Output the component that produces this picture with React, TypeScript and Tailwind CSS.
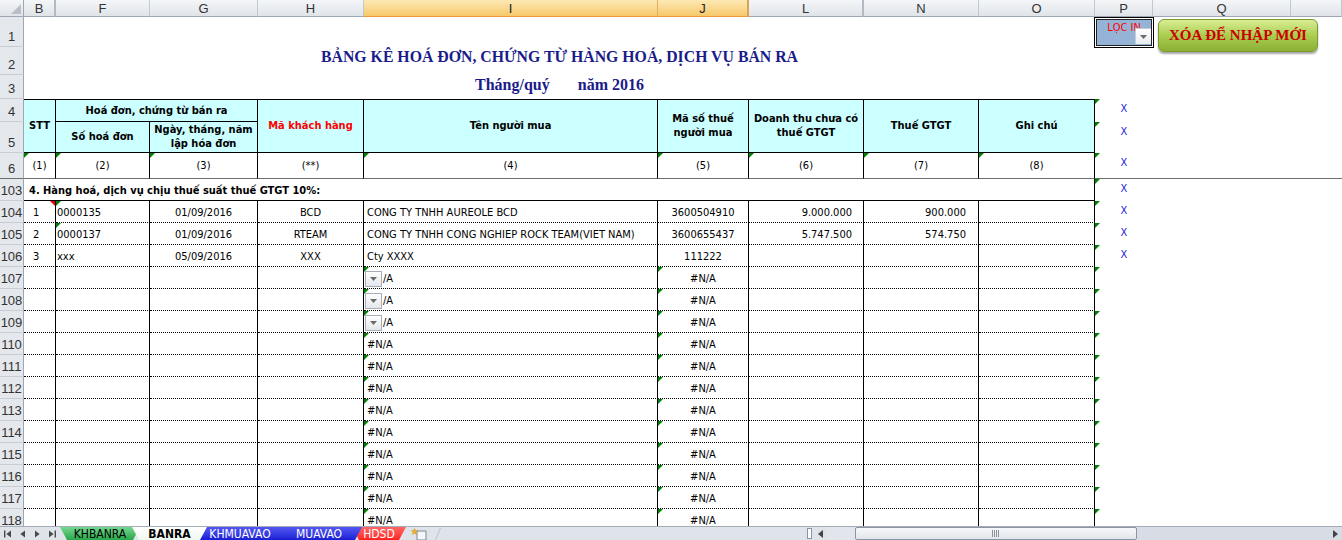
import React from "react";

const CF = "font-['DejaVu_Sans_Condensed','Liberation_Sans',sans-serif]";
const HF = "font-['Liberation_Sans',sans-serif]";
const SF = "font-['Liberation_Serif',serif]";

function GreenTri() {
  return <span className="absolute left-0 top-0 h-0 w-0 border-t-[5px] border-r-[5px] border-t-[#008000] border-r-transparent" />;
}
function RedTri() {
  return <span className="absolute right-0 top-0 h-0 w-0 border-t-[5px] border-l-[5px] border-t-[#ff0000] border-l-transparent" />;
}

function RowHdr({ n, freeze }: { n: number | string; freeze?: boolean }) {
  return (
    <div
      className={`${HF} flex items-end justify-center bg-[#e4e7ec] border-r border-r-[#9ea7b1] border-b pb-[2px] text-[13px] leading-[14px] text-[#333] ${
        freeze ? "border-b-[#6e6e6e]" : "border-b-[#c8cdd4]"
      }`}
    >
      {n}
    </div>
  );
}

function ColHdr({ l, sel, dbl }: { l: string; sel?: boolean; dbl?: boolean }) {
  const base = `${HF} flex items-center justify-center text-[13px] leading-none border-b`;
  if (sel)
    return (
      <div className={`${base} bg-gradient-to-b from-[#fde9b4] to-[#f6c86a] border-b-[#ef9a3c] text-[#222] ${dbl ? "border-r-2 border-r-[#d9a454]" : "border-r border-r-[#dfae5e]"}`}>
        {l}
      </div>
    );
  return (
    <div className={`${base} bg-gradient-to-b from-[#f4f6f8] to-[#e0e4e9] border-b-[#9ea7b1] text-[#333] ${dbl ? "border-r-2 border-r-[#b3bac3]" : "border-r border-r-[#c2c8cf]"}`}>
      {l}
    </div>
  );
}

function XCell({ x, freeze }: { x?: boolean; freeze?: boolean }) {
  return (
    <div className={`relative flex justify-center pt-[3px] text-[11px] leading-[14px] text-[#2424d8] ${freeze ? "border-b border-b-[#6e6e6e]" : ""}`}>
      <GreenTri />
      {x ? "X" : ""}
    </div>
  );
}

type Row = {
  n: number;
  b?: string;
  f?: string;
  g?: string;
  h?: string;
  i?: string;
  j?: string;
  l?: string;
  nn?: string;
  x?: boolean;
  triF?: boolean;
  redB?: boolean;
  triIJ?: boolean;
  dd?: boolean;
};

const rows: Row[] = [
  { n: 104, b: "1", f: "0000135", g: "01/09/2016", h: "BCD", i: "CONG TY TNHH AUREOLE BCD", j: "3600504910", l: "9.000.000", nn: "900.000", x: true, triF: true, redB: true },
  { n: 105, b: "2", f: "0000137", g: "01/09/2016", h: "RTEAM", i: "CONG TY TNHH CONG NGHIEP ROCK TEAM(VIET NAM)", j: "3600655437", l: "5.747.500", nn: "574.750", x: true, triF: true },
  { n: 106, b: "3", f: "xxx", g: "05/09/2016", h: "XXX", i: "Cty XXXX", j: "111222", x: true },
  ...Array.from({ length: 12 }, (_, k) => ({ n: 107 + k, i: "#N/A", j: "#N/A", triIJ: true, dd: k < 3 })),
];

const dc =
  "relative flex items-center overflow-hidden whitespace-nowrap border-r border-b border-r-black border-b-black [border-bottom-style:dotted] pt-[3px] text-[11px] leading-[14px] text-black";

const hc = "flex items-center justify-center text-center bg-[#ccffff] border-r border-b border-black font-bold text-[11px] leading-[14px] whitespace-nowrap";
const h6 = "relative flex items-center justify-center border-r border-r-black border-b border-b-[#6e6e6e] pt-[1px] text-[11px] leading-[14px]";

function DropBtn() {
  return (
    <span className="ml-[1px] flex h-[16px] w-[17px] shrink-0 items-center justify-center border border-[#a7aeb7] bg-gradient-to-b from-white to-[#e3e7ec]">
      <svg width="7" height="4" viewBox="0 0 7 4">
        <path d="M0 0H7L3.5 4Z" fill="#6b6b6b" />
      </svg>
    </span>
  );
}

function DataRow({ r }: { r: Row }) {
  return (
    <>
      <RowHdr n={r.n} />
      <div className={`${dc} pl-[9px]`}>
        {r.redB && <RedTri />}
        {r.b}
      </div>
      <div className={`${dc} pl-[1px]`}>
        {r.triF && <GreenTri />}
        {r.f}
      </div>
      <div className={`${dc} justify-center`}>{r.g}</div>
      <div className={`${dc} justify-center`}>{r.h}</div>
      <div className={`${dc} ${r.dd ? "pl-0" : "pl-[3px]"}`}>
        {r.triIJ && <GreenTri />}
        {r.dd ? (
          <>
            <DropBtn />
            <span className="ml-[1px]">/A</span>
          </>
        ) : (
          r.i
        )}
      </div>
      <div className={`${dc} justify-center`}>
        {r.triIJ && <GreenTri />}
        {r.j}
      </div>
      <div className={`${dc} justify-end pr-[11px]`}>{r.l}</div>
      <div className={`${dc} justify-end pr-[12px]`}>{r.nn}</div>
      <div className={dc}></div>
      <XCell x={r.x} />
      <div className="col-span-2"></div>
    </>
  );
}

function Arrow({ dir, bar }: { dir: "l" | "r"; bar?: boolean }) {
  return (
    <svg width="7" height="8" viewBox="0 0 7 8">
      {dir === "l" ? (
        <>
          {bar && <rect x="0" y="0.5" width="1.4" height="7" fill="#4a4a4a" />}
          <path d={bar ? "M7 0.5L2.4 4L7 7.5Z" : "M6 0.5L1.4 4L6 7.5Z"} fill="#4a4a4a" />
        </>
      ) : (
        <>
          {bar && <rect x="5.6" y="0.5" width="1.4" height="7" fill="#4a4a4a" />}
          <path d={bar ? "M0 0.5L4.6 4L0 7.5Z" : "M1 0.5L5.6 4L1 7.5Z"} fill="#4a4a4a" />
        </>
      )}
    </svg>
  );
}

const clip = "[clip-path:polygon(0_0,100%_0,calc(100%_-_7px)_100%,7px_100%)]";

function TabBar() {
  return (
    <div className={`${CF} relative flex h-[14px] shrink-0 items-stretch border-t border-[#a3acb7] bg-[#dfe4ea]`}>
      <div className="flex w-[60px] items-center gap-[8px] pl-[4px] pt-[1px]">
        <Arrow dir="l" bar />
        <Arrow dir="l" />
        <Arrow dir="r" />
        <Arrow dir="r" bar />
      </div>
      <div className={`${clip} relative z-[5] flex w-[80px] justify-center bg-gradient-to-b from-[#73d690] to-[#22a848] pt-[1px] text-[12px] leading-[12px] text-black`}>
        KHBANRA
      </div>
      <div className={`${clip} relative z-[10] ml-[-8px] flex w-[75px] justify-center bg-gradient-to-b from-white to-[#eef8f1] pt-[1px] text-[12px] font-bold leading-[12px] text-black`}>
        BANRA
      </div>
      <div className={`${clip} relative z-[4] ml-[-17px] flex w-[100px] justify-center bg-gradient-to-b from-[#5555f2] to-[#1b1bd3] pt-[1px] text-[12px] leading-[12px] text-white`}>
        KHMUAVAO
      </div>
      <div className={`${clip} relative z-[3] ml-[-14px] flex w-[86px] justify-center bg-gradient-to-b from-[#5555f2] to-[#1b1bd3] pt-[1px] text-[12px] leading-[12px] text-white`}>
        MUAVAO
      </div>
      <div className={`${clip} relative z-[2] ml-[-10px] flex w-[54px] justify-center bg-gradient-to-b from-[#ff6464] to-[#ff1c1c] pt-[1px] text-[12px] leading-[12px] text-white`}>
        HDSD
      </div>
      <div className="ml-[5px] flex w-[20px] items-start pt-[1px]">
        <svg width="18" height="12" viewBox="0 0 18 12">
          <path d="M6 3H15V12H6Z" fill="#f4f7fb" stroke="#7a8898" strokeWidth="1" />
          <path d="M3.5 0.5L4.3 2.6L6.5 2.8L4.8 4.2L5.4 6.4L3.5 5.2L1.6 6.4L2.2 4.2L0.5 2.8L2.7 2.6Z" fill="#f2b631" stroke="#c98a12" strokeWidth="0.5" />
        </svg>
      </div>
      <div className="ml-[4px] w-[6px]">
        <svg width="6" height="13" viewBox="0 0 6 13">
          <path d="M0.5 12.5L5.5 1" stroke="#b9c1cb" strokeWidth="1" />
        </svg>
      </div>
      <div className="ml-auto flex w-[537px] items-stretch">
        <div className="flex w-[8px] items-center justify-center">
          <div className="h-[11px] w-[5px] border border-[#8b95a1] bg-white" />
        </div>
        <div className="flex w-[14px] items-center justify-center">
          <svg width="5" height="8" viewBox="0 0 5 8">
            <path d="M5 0L0 4L5 8Z" fill="#444" />
          </svg>
        </div>
        <div className="w-[28px] bg-[#e2e6ec]" />
        <div className="flex w-[282px] items-center justify-center rounded-[2px] border border-[#8b95a1] bg-gradient-to-b from-[#f6f8fa] to-[#e2e6eb]">
          <svg width="8" height="7" viewBox="0 0 8 7">
            <path d="M0.5 0V7M2.5 0V7M4.5 0V7M6.5 0V7" stroke="#8a929c" strokeWidth="1" />
          </svg>
        </div>
        <div className="flex-1 bg-[#d8dde5]" />
        <div className="flex w-[14px] items-center justify-center bg-[#d8dde5]">
          <svg width="5" height="8" viewBox="0 0 5 8">
            <path d="M0 0L5 4L0 8Z" fill="#444" />
          </svg>
        </div>
      </div>
    </div>
  );
}

export default function App() {
  return (
    <div className="flex h-[540px] w-[1342px] flex-col overflow-hidden bg-white">
      <div className={`${CF} relative flex-1 overflow-hidden`}>
        <div className="grid grid-cols-[24px_32px_94px_108px_106px_294px_91px_115px_115px_116px_58px_138px_51px] grid-rows-[17px_30px_28px_24px_23px_31px_26px_repeat(16,22px)]">
          {/* column headers */}
          <div className="relative bg-gradient-to-b from-[#f4f6f8] to-[#e0e4e9] border-r border-b border-[#9ea7b1]">
            <svg className="absolute right-[2px] bottom-[2px]" width="10" height="10" viewBox="0 0 10 10">
              <path d="M10 0V10H0Z" fill="#b8bfc8" />
            </svg>
          </div>
          <ColHdr l="B" dbl />
          <ColHdr l="F" />
          <ColHdr l="G" />
          <ColHdr l="H" />
          <ColHdr l="I" sel />
          <ColHdr l="J" sel dbl />
          <ColHdr l="L" dbl />
          <ColHdr l="N" />
          <ColHdr l="O" />
          <ColHdr l="P" />
          <ColHdr l="Q" />
          <ColHdr l="" />

          {/* row 1 */}
          <RowHdr n={1} />
          <div className="col-span-12"></div>

          {/* row 2 title */}
          <RowHdr n={2} />
          <div className={`${SF} col-span-9 flex items-start justify-center pt-[1px] text-[15.8px] font-bold leading-[18px] text-[#1b1b8a]`}>
            BẢNG KÊ HOÁ ĐƠN, CHỨNG TỪ HÀNG HOÁ, DỊCH VỤ BÁN RA
          </div>
          <div className="col-span-3"></div>

          {/* row 3 subtitle */}
          <RowHdr n={3} />
          <div className={`${SF} col-span-9 flex items-start justify-center whitespace-pre pt-[1px] text-[16px] font-bold leading-[18px] text-[#1b1b8a]`}>
            {"Tháng/quý       năm 2016"}
          </div>
          <div className="col-span-3"></div>

          {/* row 4 */}
          <RowHdr n={4} />
          <div className={`${hc} row-span-2 border-t`}>STT</div>
          <div className={`${hc} col-span-2 border-t`}>Hoá đơn, chứng từ bán ra</div>
          <div className={`${hc} row-span-2 border-t text-[#ff0000]`}>Mã khách hàng</div>
          <div className={`${hc} row-span-2 border-t`}>Tên người mua</div>
          <div className={`${hc} row-span-2 border-t`}>
            Mã số thuế
            <br />
            người mua
          </div>
          <div className={`${hc} row-span-2 border-t`}>
            Doanh thu chưa có
            <br />
            thuế GTGT
          </div>
          <div className={`${hc} row-span-2 border-t`}>Thuế GTGT</div>
          <div className={`${hc} row-span-2 border-t`}>Ghi chú</div>
          <XCell x />
          <div className="col-span-2"></div>

          {/* row 5 */}
          <RowHdr n={5} />
          <div className={hc}>Số hoá đơn</div>
          <div className={hc}>
            Ngày, tháng, năm
            <br />
            lập hóa đơn
          </div>
          <XCell x />
          <div className="col-span-2"></div>

          {/* row 6 */}
          <RowHdr n={6} freeze />
          <div className={h6}>
            <GreenTri />
            (1)
          </div>
          <div className={h6}>
            <GreenTri />
            (2)
          </div>
          <div className={h6}>
            <GreenTri />
            (3)
          </div>
          <div className={h6}>(**)</div>
          <div className={h6}>
            <GreenTri />
            (4)
          </div>
          <div className={h6}>
            <GreenTri />
            (5)
          </div>
          <div className={h6}>
            <GreenTri />
            (6)
          </div>
          <div className={h6}>
            <GreenTri />
            (7)
          </div>
          <div className={h6}>
            <GreenTri />
            (8)
          </div>
          <XCell x freeze />
          <div className="col-span-2 border-b border-b-[#6e6e6e]"></div>

          {/* row 103 */}
          <RowHdr n={103} />
          <div className="col-span-9 flex items-center border-r border-b border-black pl-[5px] pt-[2px] text-[11px] font-bold leading-[14px]">
            4. Hàng hoá, dịch vụ chịu thuế suất thuế GTGT 10%:
          </div>
          <XCell x />
          <div className="col-span-2"></div>

          {rows.map((r) => (
            <DataRow key={r.n} r={r} />
          ))}
        </div>

        {/* LỌC IN combo */}
        <div className="absolute left-[1094px] top-[17px] h-[31px] w-[60px] border border-black bg-white p-[1px]">
          <div className="relative h-full w-full border border-[#222] bg-[#95b3d7]">
            <div className="pt-[2px] text-center text-[11px] leading-[12px] text-[#ff0000]">LỌC IN</div>
            <div className="absolute bottom-[1px] right-0 flex h-[16px] w-[16px] items-center justify-center border-l border-t border-[#c6ccd4] bg-gradient-to-b from-white to-[#e9ecf0]">
              <svg width="7" height="4" viewBox="0 0 7 4">
                <path d="M0 0H7L3.5 4Z" fill="#6b6b6b" />
              </svg>
            </div>
          </div>
        </div>

        {/* button */}
        <div className="absolute left-[1158px] top-[19px] flex h-[33px] w-[160px] items-center justify-center rounded-[6px] border border-[#7d9a32] bg-gradient-to-b from-[#d9ed93] via-[#aacd4e] to-[#8bb034] shadow-[0_2px_2px_rgba(0,0,0,0.35)]">
          <span className={`${SF} text-[15px] font-bold text-[#cc0000]`}>XÓA ĐỂ NHẬP MỚI</span>
        </div>
      </div>
      <TabBar />
    </div>
  );
}
